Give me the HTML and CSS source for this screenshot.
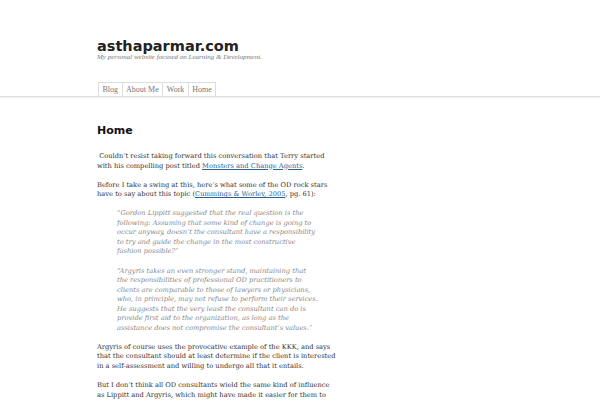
FILE: index.html
```html
<!DOCTYPE html>
<html>
<head>
<meta charset="utf-8">
<link rel="stylesheet" href="styles.css">
</head>
<body>
<div class="header">
  <div class="wrap">
    <h1 class="site-title">asthaparmar.com</h1>
    <p class="tagline">My personal website focused on Learning &amp; Development.</p>
    <ul class="tabs">
      <li>Blog</li>
      <li>About Me</li>
      <li>Work</li>
      <li class="current">Home</li>
    </ul>
  </div>
</div>
<div class="wrap content">
  <h2 class="page-title">Home</h2>
  <p>&nbsp;Couldn’t resist taking forward this conversation that Terry started with his compelling post titled <a href="#">Monsters and Change Agents</a>.</p>
  <p>Before I take a swing at this, here’s what some of the OD rock stars have to say about this topic (<a href="#">Cummings &amp; Worley, 2005</a>, pg. 61):</p>
  <blockquote>
    <p>“Gordon Lippitt suggested that the real question is the<br>following: Assuming that some kind of change is going to<br>occur anyway, doesn’t the consultant have a responsibility<br>to try and guide the change in the most constructive<br>fashion possible?”</p>
    <p>“Argyris takes an even stronger stand, maintaining that<br>the responsibilities of professional OD practitioners to<br>clients are comparable to those of lawyers or physicians,<br>who, in principle, may not refuse to perform their services.<br>He suggests that the very least the consultant can do is<br>provide first aid to the organization, as long as the<br>assistance does not compromise the consultant’s values.”</p>
  </blockquote>
  <p>Argyris of course uses the provocative example of the KKK, and says that the consultant should at least determine if the client is interested in a self-assessment and willing to undergo all that it entails.</p>
  <p>But I don’t think all OD consultants wield the same kind of influence as Lippitt and Argyris, which might have made it easier for them to push this social agenda on their clients. For most of us, the choice</p>
</div>
</body>
</html>
```
FILE: styles.css
```css
html, body { margin: 0; padding: 0; background: #fff; }
body { font-family: "DejaVu Serif", serif; color: #333; }
.wrap { width: 406px; margin-left: 97px; }
.header { border-bottom: 1px solid #ddd; box-shadow: 0 1px 2px #f2f2f2; padding-top: 37px; }
.site-title { font-family: "DejaVu Sans", sans-serif; font-weight: bold; font-size: 14.5px; margin: 0; line-height: 18px; color: #222; }
.tagline { font-family: "Liberation Serif", serif; font-style: italic; font-size: 7px; color: #777; margin: -2px 0 20px; line-height: 9px; }
.tabs { list-style: none; margin: 0 0 0 1px; padding: 0; display: flex; font-family: "Liberation Serif", serif; font-size: 8px; }
.tabs li { border: 1px solid #ddd; border-bottom: none; padding: 3px 3.5px 2px; line-height: 8px; color: #777; margin-right: -1px; }
.content { padding-top: 27px; }
.page-title { font-family: "DejaVu Sans", sans-serif; font-weight: bold; font-size: 11px; margin: 0 0 14px; line-height: 14px; color: #111; }
.content p { font-size: 6.7px; line-height: 9.55px; margin: 0 0 9.55px; width: 240px; }
.content a { color: #2a6496; }
blockquote { margin: 0 0 9.55px 20px; color: #888; font-style: italic; }
blockquote p { width: 235px !important; white-space: nowrap; }
```
